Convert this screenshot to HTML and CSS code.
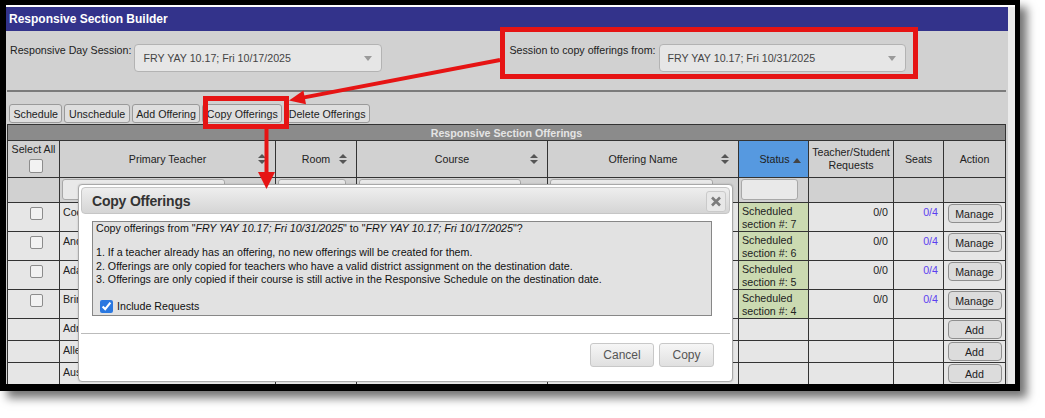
FILE: index.html
```html
<!DOCTYPE html>
<html lang="en">

<head>
  <meta charset="UTF-8">
  <title>Responsive Section Builder</title>
  <link rel="stylesheet" href="styles.css">
</head>

<body>
  <div class="frame">
    <div class="screen">
      <div class="app">
        <div class="app-title">Responsive Section Builder</div>

        <div class="sessions">
          <div class="session">
            <label>Responsive Day Session:</label>
            <div class="select select-day">
              <span>FRY YAY 10.17; Fri 10/17/2025</span>
              <svg width="8" height="5" viewBox="0 0 8 5"><polygon points="0,0 8,0 4,5" fill="#9a9a9a" /></svg>
            </div>
          </div>
          <div class="session session-from">
            <label>Session to copy offerings from:</label>
            <div class="select select-from">
              <span>FRY YAY 10.17; Fri 10/31/2025</span>
              <svg width="8" height="5" viewBox="0 0 8 5"><polygon points="0,0 8,0 4,5" fill="#9a9a9a" /></svg>
            </div>
          </div>
        </div>

        <div class="divider"></div>

        <div class="toolbar">
          <button class="tool-btn">Schedule</button>
          <button class="tool-btn">Unschedule</button>
          <button class="tool-btn">Add Offering</button>
          <button class="tool-btn">Copy Offerings</button>
          <button class="tool-btn">Delete Offerings</button>
        </div>

        <table class="offerings">
          <colgroup>
            <col style="width:52px">
            <col style="width:216px">
            <col style="width:81px">
            <col style="width:191px">
            <col style="width:191px">
            <col style="width:70px">
            <col style="width:85px">
            <col style="width:50px">
            <col style="width:62px">
          </colgroup>
          <tr class="caption-row">
            <th colspan="9">Responsive Section Offerings</th>
          </tr>
          <tr class="head-row">
            <th class="select-all">Select All<span class="box"></span></th>
            <th><div class="th-sort"><span>Primary Teacher</span><svg width="8" height="10" viewBox="0 0 8 10"><polygon points="0,4 4,0 8,4" /><polygon points="0,6 4,10 8,6" /></svg></div></th>
            <th><div class="th-sort"><span>Room</span><svg width="8" height="10" viewBox="0 0 8 10"><polygon points="0,4 4,0 8,4" /><polygon points="0,6 4,10 8,6" /></svg></div></th>
            <th><div class="th-sort"><span>Course</span><svg width="8" height="10" viewBox="0 0 8 10"><polygon points="0,4 4,0 8,4" /><polygon points="0,6 4,10 8,6" /></svg></div></th>
            <th><div class="th-sort"><span>Offering Name</span><svg width="8" height="10" viewBox="0 0 8 10"><polygon points="0,4 4,0 8,4" /><polygon points="0,6 4,10 8,6" /></svg></div></th>
            <th class="status-head">Status <svg width="8" height="5" viewBox="0 0 8 5"><polygon points="0,5 4,0 8,5" fill="#444" /></svg></th>
            <th class="two-line">Teacher/Student<br>Requests</th>
            <th>Seats</th>
            <th>Action</th>
          </tr>
          <tr class="filter-row">
            <td></td>
            <td><span class="filter w-teacher"></span></td>
            <td><span class="filter w-room"></span></td>
            <td><span class="filter w-course"></span></td>
            <td><span class="filter w-name"></span></td>
            <td><span class="filter w-status"></span></td>
            <td></td>
            <td></td>
            <td></td>
          </tr>
          <tr class="data-row">
            <td class="pick"><span class="box"></span></td>
            <td class="name">Cooper, Dana</td>
            <td></td>
            <td></td>
            <td></td>
            <td class="status">Scheduled<br>section #: 7</td>
            <td class="num">0/0</td>
            <td class="num seats">0/4</td>
            <td class="action"><button class="row-btn">Manage</button></td>
          </tr>
          <tr class="data-row">
            <td class="pick"><span class="box"></span></td>
            <td class="name">Anderson, Mark</td>
            <td></td>
            <td></td>
            <td></td>
            <td class="status">Scheduled<br>section #: 6</td>
            <td class="num">0/0</td>
            <td class="num seats">0/4</td>
            <td class="action"><button class="row-btn">Manage</button></td>
          </tr>
          <tr class="data-row">
            <td class="pick"><span class="box"></span></td>
            <td class="name">Adams, Julie</td>
            <td></td>
            <td></td>
            <td></td>
            <td class="status">Scheduled<br>section #: 5</td>
            <td class="num">0/0</td>
            <td class="num seats">0/4</td>
            <td class="action"><button class="row-btn">Manage</button></td>
          </tr>
          <tr class="data-row">
            <td class="pick"><span class="box"></span></td>
            <td class="name">Brinkley, Sam</td>
            <td></td>
            <td></td>
            <td></td>
            <td class="status">Scheduled<br>section #: 4</td>
            <td class="num">0/0</td>
            <td class="num seats">0/4</td>
            <td class="action"><button class="row-btn">Manage</button></td>
          </tr>
          <tr class="add-row">
            <td></td>
            <td class="name">Adrian, Kyle</td>
            <td></td>
            <td></td>
            <td></td>
            <td></td>
            <td></td>
            <td></td>
            <td class="action"><button class="row-btn">Add</button></td>
          </tr>
          <tr class="add-row">
            <td></td>
            <td class="name">Allen, Beth</td>
            <td></td>
            <td></td>
            <td></td>
            <td></td>
            <td></td>
            <td></td>
            <td class="action"><button class="row-btn">Add</button></td>
          </tr>
          <tr class="add-row">
            <td></td>
            <td class="name">Austin, Ray</td>
            <td></td>
            <td></td>
            <td></td>
            <td></td>
            <td></td>
            <td></td>
            <td class="action"><button class="row-btn">Add</button></td>
          </tr>
          <tr class="add-row">
            <td></td>
            <td class="name">Baker, Lee</td>
            <td></td>
            <td></td>
            <td></td>
            <td></td>
            <td></td>
            <td></td>
            <td class="action"><button class="row-btn">Add</button></td>
          </tr>
        </table>
      </div>
      <div class="strip"></div>
    </div>

    <!-- modal -->
    <div class="dialog">
      <div class="dialog-titlebar">
        <span class="dialog-title">Copy Offerings</span>
        <span class="dialog-close">
          <svg width="20" height="21" viewBox="0 0 20 21"><path d="M6 6.5 L14 14.5 M14 6.5 L6 14.5" stroke="#7c7c7c" stroke-width="2.6" /></svg>
        </span>
      </div>
      <div class="dialog-content">
        <div class="question">Copy offerings from "<i>FRY YAY 10.17; Fri 10/31/2025</i>" to "<i>FRY YAY 10.17; Fri 10/17/2025</i>"?</div>
        <div>1. If a teacher already has an offering, no new offerings will be created for them.</div>
        <div>2. Offerings are only copied for teachers who have a valid district assignment on the destination date.</div>
        <div>3. Offerings are only copied if their course is still active in the Responsive Schedule on the destination date.</div>
        <label class="include"><input type="checkbox" checked> Include Requests</label>
      </div>
      <div class="dialog-buttons">
        <button class="dlg-btn btn-cancel">Cancel</button>
        <button class="dlg-btn btn-copy">Copy</button>
      </div>
    </div>
  </div>

  <!-- red call-outs drawn over the screenshot -->
  <svg class="callouts" width="1045" height="418" viewBox="0 0 1045 418">
    <rect x="502.5" y="29.5" width="413" height="47" fill="none" stroke="#e61414" stroke-width="5" />
    <rect x="205.5" y="98.5" width="81" height="28" fill="none" stroke="#e61414" stroke-width="5" />
    <line x1="500" y1="60" x2="303" y2="97.6" stroke="#e61414" stroke-width="4" />
    <polygon points="289,100.4 306,104.3 303.4,90.5" fill="#e61414" />
    <line x1="266.5" y1="129" x2="266.5" y2="175" stroke="#e61414" stroke-width="4" />
    <polygon points="266.5,189 258,172 275,172" fill="#e61414" />
  </svg>
</body>

</html>
```

FILE: styles.css
```css
body {
  margin: 0;
  position: relative;
  width: 1045px;
  height: 418px;
  background-color: #fff;
  font-family: 'Liberation Sans', Arial, sans-serif;
  font-size: 10.67px;
  color: #222;
  overflow: hidden;
}

.frame {
  position: relative;
  box-sizing: border-box;
  width: 1020px;
  height: 391px;
  border: 5px solid #000;
  border-left-width: 6px;
  border-bottom-width: 7px;
  box-shadow: 7px 7px 9px rgba(0, 0, 0, 0.55);
}

.screen {
  display: flex;
  height: 377px;
  border-top: 2px solid #fff;
  overflow: hidden;
  background-color: #ebebeb;
}

.app {
  width: 1002px;
  flex-shrink: 0;
  background-color: #d1d1d1;
  overflow: hidden;
}

.strip {
  flex: 1;
}

.app-title {
  height: 24px;
  line-height: 24px;
  padding-left: 3px;
  background-color: #33338b;
  color: #fff;
  font-size: 12px;
  font-weight: bold;
}

/* session pickers */
.sessions {
  display: flex;
  height: 46px;
  padding: 13px 0 0 4px;
}

.session {
  display: flex;
  align-items: flex-start;
  gap: 3px;
}

.session-from {
  margin-left: 127px;
}

.session label {
  line-height: 12px;
}

.select {
  box-sizing: border-box;
  display: flex;
  align-items: center;
  justify-content: space-between;
  height: 28px;
  padding: 0 9px 0 8px;
  background-color: #e6e6e6;
  border: 1px solid #b3b3b3;
  border-radius: 4px;
  color: #444;
}

.select-day {
  width: 248px;
}

.select-from {
  width: 247px;
}

.divider {
  height: 2px;
  margin: 0 2px 0 1px;
  background-color: #7b7b7b;
}

/* toolbar */
.toolbar {
  display: flex;
  gap: 2px;
  margin-top: 12px;
  padding-left: 3px;
}

.tool-btn {
  height: 19px;
  padding: 0 3.5px;
  font-family: inherit;
  font-size: 10.67px;
  color: #222;
  background-color: #dedede;
  border: 1px solid #9a9a9a;
  border-radius: 3px;
}

/* offerings table */
.offerings {
  border-collapse: collapse;
  table-layout: fixed;
  width: 999px;
  margin: 1px 0 0 1px;
  font-size: 10.67px;
  color: #222;
}

.offerings th,
.offerings td {
  border: 1px solid #333;
  padding: 0;
}

.offerings th {
  font-weight: normal;
  background-color: #d1d1d1;
}

.caption-row {
  height: 16px;
}

.caption-row th {
  background-color: #8b8b8b;
  color: #e4e4e4;
  font-weight: bold;
  line-height: 14px;
}

.head-row {
  height: 37px;
}

.select-all {
  vertical-align: top;
  padding-top: 2px !important;
  line-height: 13px;
}

.box {
  display: block;
  box-sizing: border-box;
  width: 14px;
  height: 14px;
  background-color: #f2f2f2;
  border: 1px solid #8c8c8c;
  border-radius: 2px;
}

.select-all .box {
  margin: 3px 0 0 21px;
}

.th-sort {
  display: flex;
  align-items: center;
  padding: 0 9px 0 17px;
}

.th-sort span {
  flex: 1;
  text-align: center;
}

.th-sort svg {
  fill: #555;
}

.status-head {
  background-color: #5699e0 !important;
  padding-left: 13px !important;
}

.two-line {
  line-height: 13px;
}

.filter-row {
  height: 25px;
}

.filter-row td {
  vertical-align: top;
  padding: 1px 0 0 2px;
  background-color: #d1d1d1;
}

.filter {
  display: block;
  box-sizing: border-box;
  height: 21px;
  background-color: #e9e9e9;
  border: 1px solid #a8a8a8;
  border-radius: 3px;
}

.w-teacher {
  width: 163px;
}

.w-room {
  width: 68px;
}

.w-course {
  width: 162px;
}

.w-name {
  width: 163px;
}

.w-status {
  width: 57px;
}

.data-row {
  height: 29px;
}

.add-row {
  height: 22px;
}

.data-row td,
.add-row td {
  vertical-align: top;
  background-color: #e6e6e6;
  line-height: 13px;
}

.pick .box {
  width: 13px;
  height: 13px;
  margin: 4px 0 0 22px;
}

.name {
  padding: 3px 0 0 3px !important;
  white-space: nowrap;
  overflow: hidden;
}

.status {
  background-color: #cbdab1 !important;
  padding: 2px 0 0 3px !important;
}

.num {
  text-align: right;
  padding: 3px 5px 0 0 !important;
}

.seats {
  color: #5b3ef0;
}

.action {
  text-align: center;
  padding-top: 1px !important;
}

.row-btn {
  width: 54px;
  height: 19px;
  padding: 0;
  font-family: inherit;
  font-size: 10.67px;
  color: #222;
  background-color: #dcdcdc;
  border: 1px solid #8f8f8f;
  border-radius: 4px;
}

/* copy offerings dialog */
.dialog {
  position: absolute;
  left: 72px;
  top: 179px;
  box-sizing: border-box;
  width: 655px;
  height: 198px;
  padding: 2px;
  display: flex;
  flex-direction: column;
  background-color: #fff;
  border: 1px solid #a9a9a9;
  border-radius: 4px;
  box-shadow: 0 0 2px rgba(0, 0, 0, 0.2);
}

.dialog-titlebar {
  box-sizing: border-box;
  height: 27px;
  display: flex;
  align-items: center;
  justify-content: space-between;
  padding: 0 3px 0 10px;
  border: 1px solid #c6c6c6;
  border-radius: 4px;
  background: linear-gradient(#eeeeee, #d5d5d5);
}

.dialog-title {
  font-size: 14px;
  font-weight: bold;
  color: #333;
  letter-spacing: -0.2px;
}

.dialog-close {
  box-sizing: border-box;
  width: 20px;
  height: 21px;
  margin-top: 2px;
  background-color: #e8e8e8;
  border: 1px solid #cacaca;
  border-radius: 3px;
}

.dialog-close svg {
  display: block;
  margin: -1px;
}

.dialog-content {
  box-sizing: border-box;
  width: 620px;
  height: 95px;
  margin: 7px 0 0 11px;
  padding: 0 3px;
  line-height: 13.5px;
  color: #111;
  background-color: #e2e2e2;
  border: 1px solid #878787;
}

.question {
  margin-bottom: 10.5px;
}

.include {
  display: flex;
  align-items: center;
  gap: 4px;
  margin-top: 12px;
  height: 16px;
}

.include input {
  width: 13px;
  height: 13px;
  margin: 0 0 0 4px;
  accent-color: #2a78e0;
}

.dialog-buttons {
  display: flex;
  justify-content: flex-end;
  gap: 5px;
  margin-top: 17px;
  padding: 9px 16px 0 0;
  border-top: 1px solid #bbb;
}

.dlg-btn {
  height: 24px;
  padding: 0;
  font-family: inherit;
  font-size: 12px;
  color: #555;
  background: linear-gradient(#f6f6f6, #e0e0e0);
  border: 1px solid #c8c8c8;
  border-radius: 3px;
}

.btn-cancel {
  width: 64px;
}

.btn-copy {
  width: 55px;
}

.callouts {
  position: absolute;
  left: 0;
  top: 0;
  pointer-events: none;
}
```
